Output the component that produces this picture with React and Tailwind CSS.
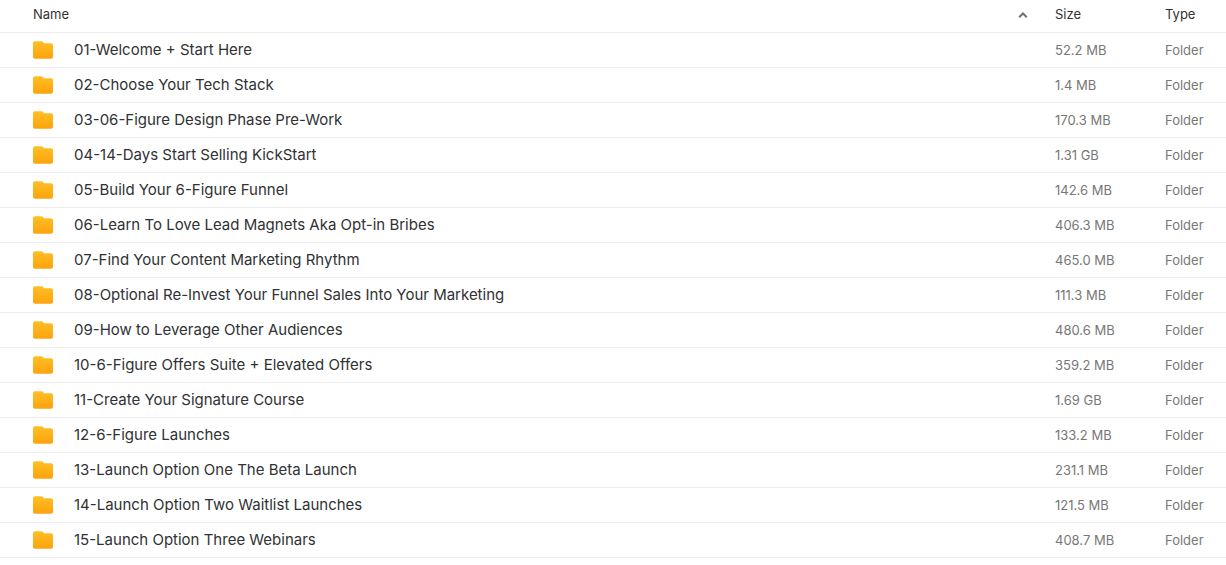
const folders = [
  { name: '01-Welcome + Start Here', size: '52.2 MB' },
  { name: '02-Choose Your Tech Stack', size: '1.4 MB' },
  { name: '03-06-Figure Design Phase Pre-Work', size: '170.3 MB' },
  { name: '04-14-Days Start Selling KickStart', size: '1.31 GB' },
  { name: '05-Build Your 6-Figure Funnel', size: '142.6 MB' },
  { name: '06-Learn To Love Lead Magnets Aka Opt-in Bribes', size: '406.3 MB' },
  { name: '07-Find Your Content Marketing Rhythm', size: '465.0 MB' },
  { name: '08-Optional Re-Invest Your Funnel Sales Into Your Marketing', size: '111.3 MB' },
  { name: '09-How to Leverage Other Audiences', size: '480.6 MB' },
  { name: '10-6-Figure Offers Suite + Elevated Offers', size: '359.2 MB' },
  { name: '11-Create Your Signature Course', size: '1.69 GB' },
  { name: '12-6-Figure Launches', size: '133.2 MB' },
  { name: '13-Launch Option One The Beta Launch', size: '231.1 MB' },
  { name: '14-Launch Option Two Waitlist Launches', size: '121.5 MB' },
  { name: '15-Launch Option Three Webinars', size: '408.7 MB' }
]

function FolderIcon() {
  return (
    <svg className="h-5 w-5 shrink-0" viewBox="0 0 20 20" aria-hidden="true">
      <defs>
        <linearGradient id="folder-fill" x1="0" y1="0" x2="0" y2="1">
          <stop offset="0" stopColor="#ffbf26" />
          <stop offset="1" stopColor="#fca30c" />
        </linearGradient>
      </defs>
      <path
        d="M2 .3h6.400c.6 0 1.100.2 1.500.6L11.200 2.300H18c1.100 0 2 .9 2 2v11.500c0 1.100-.9 2-2 2H2c-1.100 0-2-.9-2-2V2.300c0-1.100.9-2 2-2z"
        fill="url(#folder-fill)"
      />
    </svg>
  )
}

export default function App() {
  return (
    <main className="min-h-screen bg-white font-['Inter',sans-serif]">
      <table className="w-full table-fixed border-collapse text-left">
        <colgroup>
          <col />
          <col className="w-[110px]" />
          <col className="w-[61px]" />
        </colgroup>
        <thead>
          <tr className="h-8 border-b border-[#ececec] text-[13px] text-[#303233]">
            <th className="pt-0 pr-[26px] pb-0.5 pl-[33px] font-normal">
              <button className="flex w-full items-center justify-between">
                Name
                <svg className="h-3 w-3" viewBox="0 0 12 12" fill="none" aria-hidden="true">
                  <path d="M2.200 8.300L6 4.500l3.800 3.800" stroke="#6f7075" strokeWidth="2" />
                </svg>
              </button>
            </th>
            <th className="p-0 pb-0.5 font-normal">Size</th>
            <th className="p-0 pb-0.5 font-normal">Type</th>
          </tr>
        </thead>
        <tbody>
          {folders.map(({ name, size }) => (
            <tr key={name} className="h-[35px] border-b border-[#ececec] text-[13px] text-[#777]">
              <td className="pt-0.5 pr-[26px] pb-0 pl-[33px]">
                <a href="#" className="flex items-center gap-[21px] text-[15px] text-[#303233]">
                  <FolderIcon />
                  <span className="truncate">{name}</span>
                </a>
              </td>
              <td className="p-0 pt-0.5">{size}</td>
              <td className="p-0 pt-0.5">Folder</td>
            </tr>
          ))}
        </tbody>
      </table>
    </main>
  )
}
